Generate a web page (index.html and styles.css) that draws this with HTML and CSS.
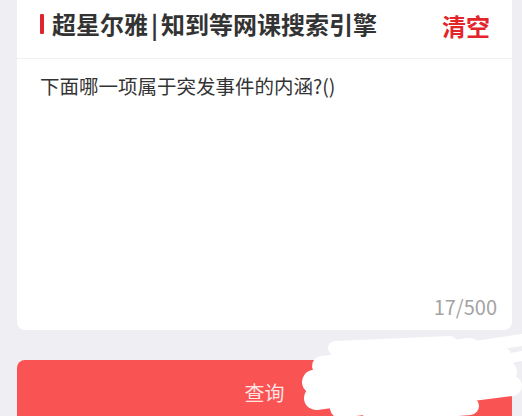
FILE: index.html
```html
<!DOCTYPE html>
<html lang="zh-CN">
<head>
<meta charset="utf-8">
<link rel="stylesheet" href="styles.css">
</head>
<body>
<div class="page">
  <div class="card">
    <div class="header">
      <div class="title"><span class="mark"></span><span>超星尔雅<span class="sep">|</span>知到等网课搜索引擎</span></div>
      <div class="clear">清空</div>
    </div>
    <div class="body">
      <div class="question">下面哪一项属于突发事件的内涵?()</div>
      <div class="counter">17/500</div>
    </div>
  </div>
  <div class="button">查询</div>
</div>
<svg class="scribble" width="522" height="416" viewBox="0 0 522 416">
  <g stroke="#ffffff" stroke-linecap="round" fill="none">
    <path d="M335 348 L450 343" stroke-width="14"/>
    <path d="M322 366 L470 348" stroke-width="20"/>
    <path d="M314 382 L500 358" stroke-width="24"/>
    <path d="M316 398 L505 372" stroke-width="24"/>
    <path d="M340 408 L512 386" stroke-width="20"/>
    <path d="M372 414 L470 406" stroke-width="18"/>
    <path d="M455 350 L522 340" stroke-width="12"/>
    <path d="M470 366 L522 356" stroke-width="10"/>
  </g>
</svg>
</body>
</html>
```

FILE: styles.css
```css
html, body {
  margin: 0;
  padding: 0;
}
body {
  background: #eeeef3;
  width: 522px;
  height: 416px;
  overflow: hidden;
  position: relative;
  font-family: "Noto Sans CJK SC", "Noto Sans", sans-serif;
}
.page {
  padding: 0 10px 0 17px;
}
.card {
  background: #ffffff;
  border-radius: 0 0 8px 8px;
  width: 495px;
}
.header {
  display: flex;
  justify-content: space-between;
  align-items: center;
  box-sizing: border-box;
  height: 59px;
  padding: 0 22px 10px 23px;
  border-bottom: 1px solid #f1f1f3;
}
.title {
  display: flex;
  align-items: center;
  font-size: 24px;
  font-weight: bold;
  color: #333333;
  line-height: 28px;
}
.sep {
  margin: 0 3px;
}
.mark {
  width: 4px;
  height: 20px;
  background: #e0262b;
  margin-right: 8px;
  border-radius: 1px;
}
.clear {
  font-size: 24px;
  font-weight: bold;
  color: #e3242a;
  line-height: 28px;
  margin-top: 3px;
}
.body {
  height: 271px;
  box-sizing: border-box;
  padding: 13px 15px 9px 23px;
  display: flex;
  flex-direction: column;
  justify-content: space-between;
}
.question {
  font-size: 19.5px;
  line-height: 28px;
  color: #333333;
}
.counter {
  align-self: flex-end;
  font-size: 20px;
  line-height: 28px;
  color: #a3a3a3;
}
.button {
  margin-top: 30px;
  width: 495px;
  height: 64px;
  border-radius: 8px;
  background: #f95353;
  color: rgba(255, 255, 255, 0.85);
  font-size: 20px;
  display: flex;
  align-items: center;
  justify-content: center;
}
.scribble {
  position: absolute;
  left: 0;
  top: 0;
}
```
